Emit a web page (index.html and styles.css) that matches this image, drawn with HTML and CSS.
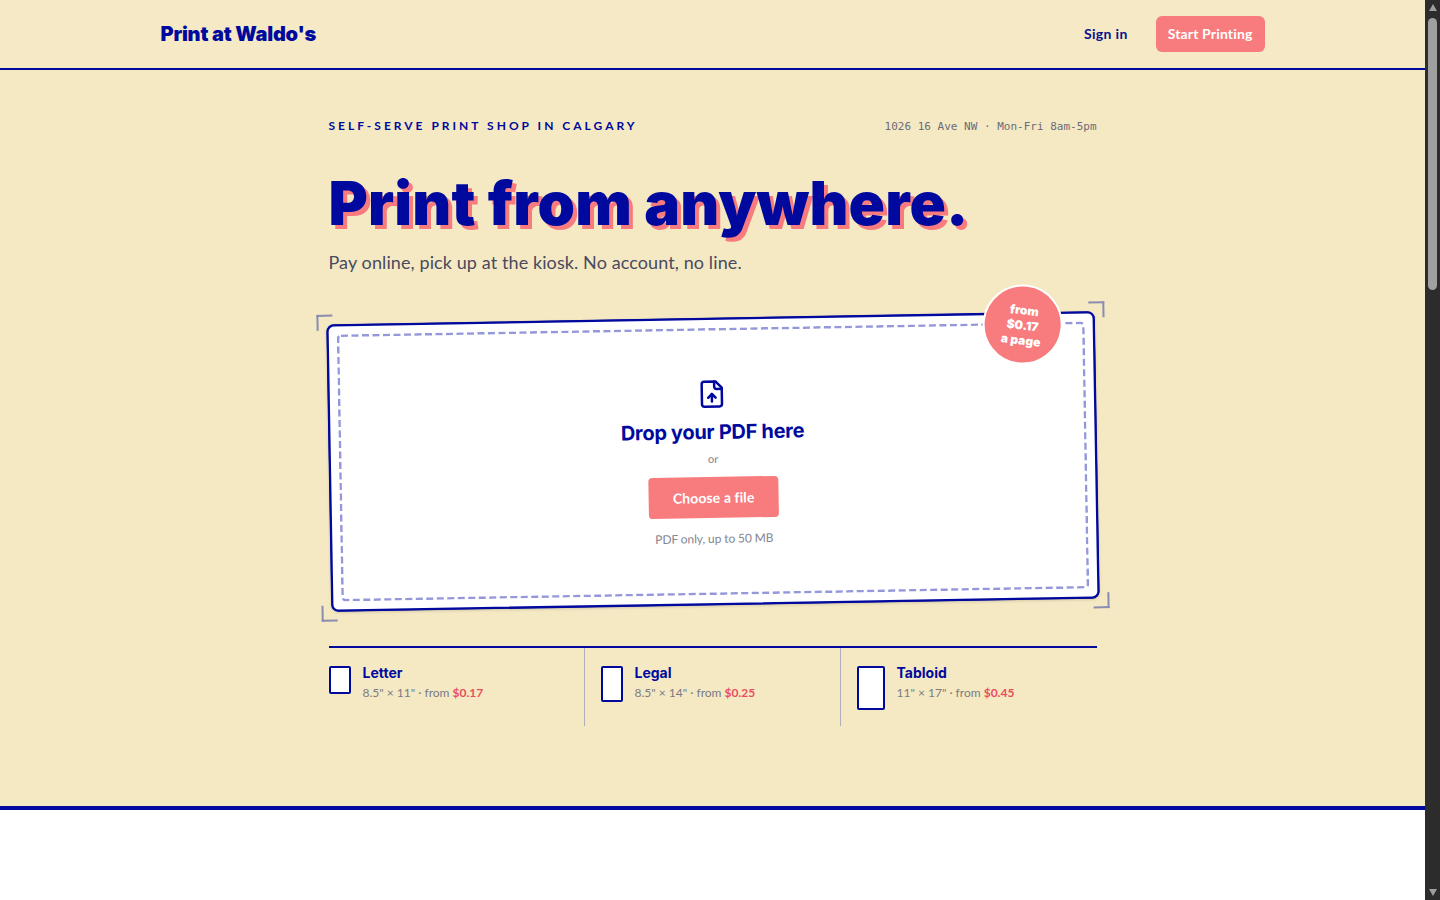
FILE: index.html
```html
<!DOCTYPE html>
<html lang="en">
<head>
  <meta charset="UTF-8" />
  <title>Print at Waldo's</title>
  <link rel="stylesheet" href="styles.css">
</head>
<body>

  <div class="page">
    <header class="site-header">
      <div class="header-inner">
        <a class="logo" href="#">Print at Waldo's</a>
        <nav class="header-nav">
          <a class="sign-in" href="#">Sign in</a>
          <a class="start-btn" href="#">Start Printing</a>
        </nav>
      </div>
    </header>

    <main class="hero">
      <div class="hero-top">
        <span class="eyebrow">SELF-SERVE PRINT SHOP IN CALGARY</span>
        <span class="address">1026 16 Ave NW · Mon-Fri 8am-5pm</span>
      </div>

      <h1 class="headline">Print from anywhere.</h1>
      <p class="subhead">Pay online, pick up at the kiosk. No account, no line.</p>

      <div class="dropzone">
        <span class="crop crop-tl"></span>
        <span class="crop crop-tr"></span>
        <span class="crop crop-bl"></span>
        <span class="crop crop-br"></span>
        <div class="dropzone-inner">
          <svg class="dash-frame"><rect class="dash-rect" rx="3" /></svg>
          <svg class="file-icon" viewBox="0 0 24 24" fill="none" stroke="currentColor" stroke-width="2" stroke-linecap="round" stroke-linejoin="round">
            <path d="M15 2H6a2 2 0 0 0-2 2v16a2 2 0 0 0 2 2h12a2 2 0 0 0 2-2V7Z" />
            <path d="M14 2v4a2 2 0 0 0 2 2h4" />
            <path d="M12 12v6" />
            <path d="m15 15-3-3-3 3" />
          </svg>
          <h2 class="drop-title">Drop your PDF here</h2>
          <p class="drop-or">or</p>
          <button class="choose-btn">Choose a file</button>
          <p class="drop-note">PDF only, up to 50 MB</p>
        </div>
        <div class="stamp"><span>from<br>$0.17<br>a page</span></div>
      </div>

      <div class="sizes">
        <div class="size">
          <span class="sheet sheet-letter"></span>
          <div>
            <div class="size-name">Letter</div>
            <div class="size-info">8.5" × 11" · from <strong>$0.17</strong></div>
          </div>
        </div>
        <div class="size">
          <span class="sheet sheet-legal"></span>
          <div>
            <div class="size-name">Legal</div>
            <div class="size-info">8.5" × 14" · from <strong>$0.25</strong></div>
          </div>
        </div>
        <div class="size">
          <span class="sheet sheet-tabloid"></span>
          <div>
            <div class="size-name">Tabloid</div>
            <div class="size-info">11" × 17" · from <strong>$0.45</strong></div>
          </div>
        </div>
      </div>
    </main>

    <section class="below-fold"></section>
  </div>

  <div class="scrollbar">
    <span class="arrow-up"></span>
    <span class="thumb"></span>
    <span class="arrow-down"></span>
  </div>

</body>
</html>
```

FILE: styles.css
```css
html {
  height: 100%;
}
body {
  margin: 0;
  height: 100vh;
  overflow: hidden;
  display: flex;
  background-color: #fff;
  color: #00099e;
  font-family: Lato, "Noto Sans", Arial, sans-serif;
}
a {
  text-decoration: none;
}
.page {
  flex: 1;
  min-width: 0;
}
.site-header {
  background-color: #f5eac5;
  border-bottom: 2px solid #00099e;
}
.header-inner {
  max-width: 1104px;
  height: 68px;
  margin: 0 auto;
  display: flex;
  align-items: center;
  justify-content: space-between;
}
.logo {
  color: #00099e;
  font-family: Inter, sans-serif;
  font-size: 20px;
  font-weight: 900;
  letter-spacing: -0.2px;
}
.header-nav {
  display: flex;
  align-items: center;
  gap: 28px;
}
.sign-in {
  color: #0a0f8c;
  font-size: 14px;
  font-weight: 700;
  letter-spacing: 0.35px;
  padding-bottom: 2px;
}
.start-btn {
  background-color: #f87b7e;
  color: #fff;
  font-size: 14px;
  font-weight: 700;
  letter-spacing: 0.15px;
  padding: 8px 12px;
  line-height: 20px;
  border-radius: 6px;
}
.hero {
  background-color: #f5e9c4;
  border-bottom: 4px solid #00099e;
  padding: 48px 0 80px;
}
.hero > * {
  width: 768px;
  margin-left: auto;
  margin-right: auto;
}
.hero-top {
  display: flex;
  justify-content: space-between;
  align-items: center;
  height: 16px;
}
.eyebrow {
  font-size: 12px;
  font-weight: 700;
  letter-spacing: 0.25em;
  padding-bottom: 2px;
}
.address {
  font-family: "DejaVu Sans Mono", monospace;
  font-size: 11px;
  color: #6b6b78;
}
.headline {
  margin-top: 31px;
  margin-bottom: 0;
  font-family: Inter, sans-serif;
  font-size: 60px;
  font-weight: 900;
  line-height: 76px;
  letter-spacing: 0.2px;
  text-shadow: 4px 4px 0 #f87b7e;
}
.subhead {
  margin-top: 7px;
  margin-bottom: 0;
  font-size: 18px;
  line-height: 28px;
  letter-spacing: 0.1px;
  color: #4a4a5e;
}
.dropzone {
  position: relative;
  box-sizing: border-box;
  height: 287px;
  margin-top: 42px;
  padding: 8px;
  background-color: #fff;
  border: 2px solid #00099e;
  border-radius: 7px;
  box-shadow: 0 0 0 0.3px #00099e, 0 1px 3px rgba(0, 0, 0, 0.18);
  transform: rotate(-1deg);
}
.dropzone-inner {
  position: relative;
  box-sizing: border-box;
  height: 100%;
  display: flex;
  flex-direction: column;
  align-items: center;
  padding-top: 51px;
}
.dash-frame {
  position: absolute;
  top: 0;
  left: 0;
  width: 100%;
  height: 100%;
}
.dash-rect {
  x: 1.25px;
  y: 1.25px;
  width: calc(100% - 2.5px);
  height: calc(100% - 2.5px);
  fill: none;
  stroke: #9498da;
  stroke-width: 2.5px;
  stroke-dasharray: 7 3.5;
}
.crop {
  position: absolute;
  width: 14px;
  height: 14px;
  border: 0 solid #8a8db0;
}
.crop-tl {
  top: -12px;
  left: -12px;
  border-width: 2px 0 0 2px;
}
.crop-tr {
  top: -12px;
  right: -12px;
  border-width: 2px 2px 0 0;
}
.crop-bl {
  bottom: -12px;
  left: -12px;
  border-width: 0 0 2px 2px;
}
.crop-br {
  bottom: -12px;
  right: -12px;
  border-width: 0 2px 2px 0;
}
.stamp {
  position: absolute;
  top: -30px;
  right: 30px;
  box-sizing: border-box;
  width: 80px;
  height: 80px;
  display: flex;
  align-items: center;
  justify-content: center;
  background-color: #f87b7e;
  border: 2px solid #fff;
  border-radius: 50%;
  color: #fff;
  font-family: Inter, sans-serif;
  font-size: 12px;
  font-weight: 900;
  line-height: 15px;
  text-align: center;
  transform: rotate(8deg);
}
.file-icon {
  position: relative;
  width: 30px;
  height: 30px;
  color: #00099e;
}
.drop-title {
  margin: 9px 0 0;
  font-family: Inter, sans-serif;
  font-size: 20px;
  font-weight: 700;
  line-height: 28px;
  letter-spacing: -0.3px;
}
.drop-or {
  margin: 5px 0 0;
  font-size: 11px;
  line-height: 16px;
  color: #7b7b8a;
}
.choose-btn {
  position: relative;
  margin-top: 10px;
  width: 130px;
  height: 41px;
  border: none;
  border-radius: 4px;
  background-color: #f87b7e;
  color: #fff;
  font-family: Lato, sans-serif;
  font-size: 14px;
  font-weight: 700;
  letter-spacing: 0.1px;
}
.drop-note {
  margin: 13px 0 0;
  font-size: 12px;
  line-height: 16px;
  letter-spacing: -0.1px;
  color: #85858f;
}
.sizes {
  display: grid;
  grid-template-columns: repeat(3, 1fr);
  margin-top: 41px;
  border-top: 2px solid #00099e;
}
.size {
  display: flex;
  align-items: flex-start;
  gap: 12px;
  padding: 18px 16px 16px;
  border-right: 1px solid #b0b0b8;
}
.size:first-child {
  padding-left: 0;
}
.size:last-child {
  border-right: none;
}
.sheet {
  box-sizing: border-box;
  flex-shrink: 0;
  background-color: #fff;
  border: 2px solid #00099e;
  border-radius: 2px;
}
.sheet-letter {
  width: 22px;
  height: 28px;
}
.sheet-legal {
  width: 22px;
  height: 36px;
}
.sheet-tabloid {
  width: 28px;
  height: 44px;
}
.size-name {
  font-family: Inter, sans-serif;
  font-size: 14px;
  font-weight: 700;
  line-height: 14px;
}
.size-info {
  font-size: 12px;
  line-height: 16px;
  margin-top: 5px;
  color: #7b7b82;
}
.size-info strong {
  color: #ea4d5c;
}
.below-fold {
  height: 90px;
  background-color: #fff;
}
.scrollbar {
  flex: 0 0 15px;
  height: 100vh;
  box-sizing: border-box;
  padding: 4px 3px;
  display: flex;
  flex-direction: column;
  align-items: center;
  background-color: #2c2c2c;
}
.arrow-up,
.arrow-down {
  width: 0;
  height: 0;
  border-left: 4.5px solid transparent;
  border-right: 4.5px solid transparent;
}
.arrow-up {
  border-bottom: 7px solid #9f9f9f;
}
.arrow-down {
  margin-top: auto;
  border-top: 7px solid #9f9f9f;
}
.thumb {
  width: 9px;
  height: 272px;
  margin-top: 7px;
  border-radius: 5px;
  background-color: #9f9f9f;
}
```
